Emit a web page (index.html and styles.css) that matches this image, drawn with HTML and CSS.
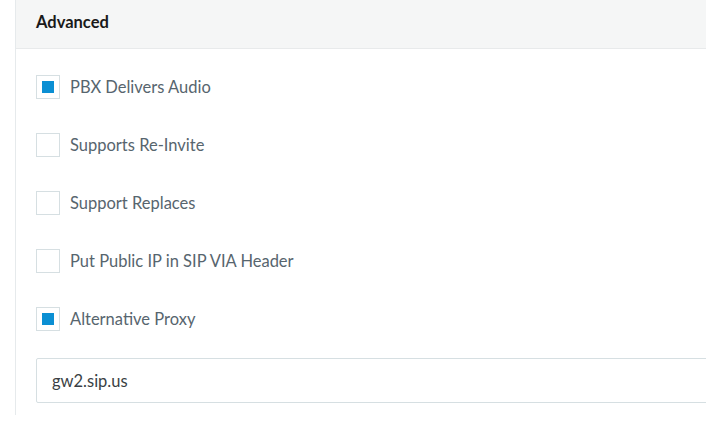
FILE: index.html
```html
<!DOCTYPE html>
<html>
<head>
<meta charset="utf-8">
<link rel="stylesheet" href="styles.css">
</head>
<body>
<div class="panel">
  <div class="panel-head">Advanced</div>
  <div class="panel-body">
    <label class="check"><span class="box on"></span><span class="lbl">PBX Delivers Audio</span></label>
    <label class="check"><span class="box"></span><span class="lbl">Supports Re-Invite</span></label>
    <label class="check"><span class="box"></span><span class="lbl">Support Replaces</span></label>
    <label class="check"><span class="box"></span><span class="lbl">Put Public IP in SIP VIA Header</span></label>
    <label class="check"><span class="box on"></span><span class="lbl">Alternative Proxy</span></label>
    <div class="field">gw2.sip.us</div>
  </div>
</div>
</body>
</html>
```

FILE: styles.css
```css
html, body {
  margin: 0;
  padding: 0;
  background: #fff;
  font-family: Lato, "Open Sans", sans-serif;
  overflow: hidden;
}
.panel {
  margin-left: 15px;
  width: 720px;
  border-left: 1px solid #e6eaec;
  height: 415px;
}
.panel-head {
  height: 49px;
  box-sizing: border-box;
  padding: 12px 20px 0 20px;
  background: #f5f6f6;
  border-bottom: 1px solid #e8eaeb;
  font-weight: bold;
  font-size: 16.5px;
  color: #1a1a1a;
}
.panel-body {
  padding: 26px 0 0 20px;
  display: flex;
  flex-direction: column;
}
.check {
  display: flex;
  align-items: center;
  gap: 10px;
  height: 24px;
  margin-bottom: 34px;
}
.box {
  width: 24px;
  height: 24px;
  box-sizing: border-box;
  border: 1px solid #d6dfe2;
  background: #fff;
  display: flex;
  align-items: center;
  justify-content: center;
}
.box.on::after {
  content: "";
  width: 12px;
  height: 12px;
  background: #0b8fd3;
}
.lbl {
  font-size: 16.5px;
  color: #57656e;
}
.field {
  margin-top: -7px;
  height: 45px;
  box-sizing: border-box;
  border: 1px solid #d6dfe2;
  border-radius: 2px;
  padding: 0 15px;
  display: flex;
  align-items: center;
  font-size: 16.5px;
  color: #3a3f44;
}
```
